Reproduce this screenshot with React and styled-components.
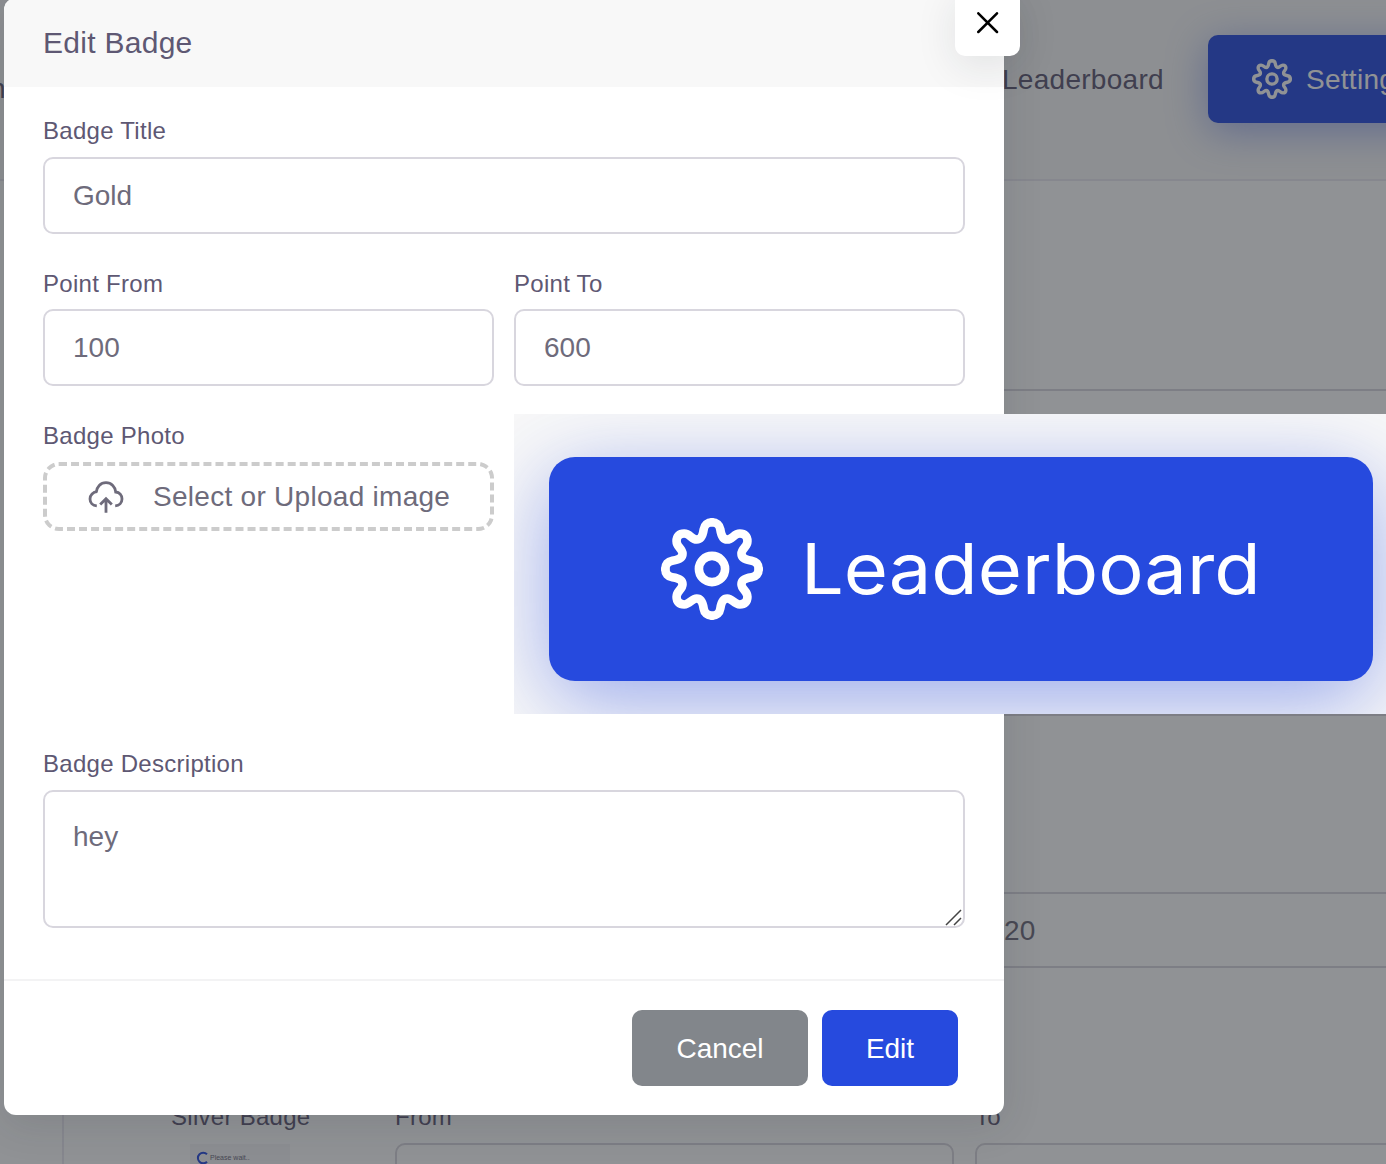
import React from "react";
import styled, { createGlobalStyle } from "styled-components";

const GlobalStyle = createGlobalStyle`
  *, *::before, *::after { box-sizing: border-box; }
  body {
    margin: 0;
    overflow: hidden;
    font-family: "Liberation Sans", Helvetica, Arial, sans-serif;
    letter-spacing: 0.28px;
    color: #5e5873;
  }
`;

const Screen = styled.div`
  position: relative;
  width: 1386px;
  height: 1164px;
  overflow: hidden;
  background: #fff;
`;

/* ---------- page behind the dialog ---------- */

const TopNav = styled.nav`
  display: flex;
  align-items: center;
  height: 181px;
  padding-bottom: 21px;
  background: #f8f8f8;
  border-bottom: 2px solid #ebe9f1;
`;

const NavItem = styled.span`
  flex: none;
  width: ${(p) => p.$width};
  margin-left: ${(p) => p.$offset || "0"};
  padding-top: ${(p) => p.$drop || "0"};
  font-size: 28px;
  line-height: 40px;
  white-space: nowrap;
`;

const NavButton = styled.div`
  flex: none;
  display: flex;
  align-items: center;
  gap: 14px;
  width: 250px;
  height: 88px;
  padding-left: 44px;
  border-radius: 10px;
  background: #264ade;
  color: #fff;
  font-size: 28px;
  box-shadow: 0 8px 40px rgba(38, 74, 222, 0.42);
`;

const NavButtonText = styled.span`
  padding-top: 2px;
`;

const BadgeList = styled.section`
  width: 1560px;
  height: 1100px;
  margin-left: 62px;
  padding: 166px 0 0 107px;
  border-left: 2px solid #ebe9f1;
`;

const BadgeRow = styled.div`
  display: grid;
  grid-template-columns: 203px 559px 559px;
  column-gap: 21px;
  height: 251.33px;
`;

const NameCell = styled.div`
  width: 160px;
  padding-top: 2px;
  font-size: 24px;
  line-height: 28px;
`;

const Thumb = styled.div`
  display: flex;
  gap: 1px;
  width: 100px;
  height: 60px;
  margin: 13px 0 0 19px;
  padding: 7px 6px;
  background: #f7f7f9;
  color: #6e6b7b;
  font-size: 7px;
  line-height: 14px;
  letter-spacing: 0;
`;

const FieldCell = styled.div`
  min-width: 0;
`;

const RowLabel = styled.div`
  height: 42px;
  padding-top: 2px;
  font-size: 24px;
  line-height: 28px;
`;

const RowInput = styled.div`
  height: 76px;
  padding-left: 27px;
  border: 2px solid #d8d6de;
  border-radius: 10px;
  font-size: 28px;
  line-height: 73px;
  color: #6e6b7b;
`;

const Backdrop = styled.div`
  position: absolute;
  inset: 0;
  background: rgba(34, 38, 44, 0.5);
`;

/* ---------- dialog ---------- */

const Dialog = styled.div`
  position: absolute;
  left: 4px;
  top: -2px;
  width: 1000px;
  height: 1117px;
  display: flex;
  flex-direction: column;
  border-radius: 12px;
  background: #fff;
  box-shadow: 0 10px 40px rgba(34, 41, 47, 0.12);
`;

const DialogHeader = styled.header`
  flex: none;
  height: 89px;
  padding: 25px 39px 0;
  border-radius: 12px 12px 0 0;
  background: #f8f8f8;
`;

const DialogTitle = styled.h5`
  margin: 0;
  font-size: 30px;
  font-weight: 400;
  line-height: 40px;
`;

const CloseButton = styled.button`
  position: absolute;
  left: 951px;
  top: -8px;
  width: 65px;
  height: 66px;
  display: flex;
  align-items: flex-start;
  padding: 22px 0 0 22px;
  border: 0;
  border-radius: 10px;
  background: #fff;
  box-shadow: 0 10px 40px rgba(34, 41, 47, 0.1);
`;

const DialogBody = styled.div`
  flex: none;
  height: 892px;
  padding: 30px 39px 0;
`;

const FieldRow = styled.div`
  display: grid;
  grid-template-columns: ${(p) => (p.$split ? "451px 451px" : "1fr")};
  column-gap: 20px;
  margin-bottom: ${(p) => p.$gap};
`;

const Field = styled.div`
  padding-top: ${(p) => p.$inset || "0"};
`;

const Label = styled.label`
  display: block;
  height: ${(p) => p.$height || "40px"};
  font-size: 24px;
  line-height: 28px;
`;

const Input = styled.input`
  display: block;
  width: 100%;
  height: 77px;
  padding: 1px 28px 0;
  border: 2px solid #d8d6de;
  border-radius: 10px;
  outline: none;
  background: #fff;
  color: #6e6b7b;
  font: 28px "Liberation Sans", Helvetica, Arial, sans-serif;
`;

const TextAreaWrap = styled.div`
  position: relative;
  svg {
    position: absolute;
    right: 3px;
    bottom: 2px;
  }
`;

const TextArea = styled.textarea`
  display: block;
  width: 100%;
  height: 138px;
  padding: 25px 28px 20px;
  border: 2px solid #d8d6de;
  border-radius: 10px;
  outline: none;
  resize: none;
  overflow: hidden;
  color: #6e6b7b;
  font: 28px/40px "Liberation Sans", Helvetica, Arial, sans-serif;
`;

const UploadBox = styled.div`
  display: flex;
  align-items: center;
  gap: 29px;
  height: 69px;
  padding-left: 41px;
  border: 4px dashed #ccc;
  border-radius: 16px;
  color: #6e6b7b;
  font-size: 28px;
  white-space: nowrap;
  svg { flex: none; }
`;

const Preview = styled.div`
  width: 900px;
  height: 300px;
  padding: 43px 0 0 35px;
  overflow: hidden;
  background: #f8f8f8;
`;

const PreviewButton = styled.div`
  display: flex;
  align-items: center;
  gap: 38px;
  width: 824px;
  height: 224px;
  padding-left: 112px;
  border-radius: 26px;
  background: #264ade;
  color: #fff;
  box-shadow: 0 20px 84px rgba(38, 74, 222, 0.45);
`;

const PreviewText = styled.span`
  font-family: Inter, "Open Sans", sans-serif;
  font-size: 70px;
  line-height: 90px;
  letter-spacing: 0;
  transform: scaleX(1.083);
  transform-origin: left center;
`;

const DialogFooter = styled.footer`
  display: flex;
  justify-content: flex-end;
  gap: 14px;
  padding: 29px 46px 0;
  border-top: 2px solid #f3f3f4;
`;

const Button = styled.button`
  width: ${(p) => p.$width};
  height: 76px;
  padding: 1px 0 0;
  border: 0;
  border-radius: 10px;
  background: ${(p) => (p.$primary ? "#264ade" : "#82868b")};
  color: #fff;
  font: 28px "Liberation Sans", Helvetica, Arial, sans-serif;
`;

const TOOTH =
  "M0-141C14-141 23-133 25-120C27-106 30-89 46-89C62-89 66-107 84-107C99-107 107-99 107-84C107-66 89-62 89-46C89-30 106-27 120-25C133-23 141-14 141 0";

function Gear({ size }) {
  return (
    <svg width={size} height={size} viewBox="-154 -154 308 308" fill="none" stroke="currentColor" strokeWidth="26" strokeLinecap="round">
      {[0, 90, 180, 270].map((angle) => (
        <path key={angle} d={TOOTH} transform={`rotate(${angle})`} />
      ))}
      <circle r="39.5" />
    </svg>
  );
}

function CloudUpload() {
  return (
    <svg width="36" height="36" viewBox="0 0 36 36" fill="none" stroke="currentColor" strokeWidth="2.8">
      <path d="M8.8 26.9C4.8 26.6 2 23.6 2 20C2 16.200 5 13 9.200 12.700" />
      <path d="M8.200 13.500C8.600 7.800 12.600 3.700 18 3.700S27.400 7.800 27.700 13C31.500 13.400 34 16.300 34 20C34 23.600 31.200 26.600 27.200 26.900" />
      <path d="M18 33.800V19.600M12.200 25.600L18 19.800L23.800 25.600" />
    </svg>
  );
}

const rows = [
  {},
  {},
  { to: "20" },
  { name: "Silver Badge", fromLabel: "From", toLabel: "To", thumb: true },
];

export default function App() {
  return (
    <>
      <GlobalStyle />
      <Screen>
        <TopNav>
          <NavItem $width="20px" $offset="-10px" $drop="19px">n</NavItem>
          <NavItem $width="206px" $offset="992px" $drop="2px">Leaderboard</NavItem>
          <NavButton>
            <Gear size={40} />
            <NavButtonText>Settings</NavButtonText>
          </NavButton>
        </TopNav>
        <BadgeList>
          {rows.map((row, i) => (
            <BadgeRow key={i}>
              <NameCell>
                {row.name}
                {row.thumb && (
                  <Thumb>
                    <svg width="13" height="14" viewBox="0 0 13 14" fill="none" stroke="#264ade" strokeWidth="2">
                      <path d="M11 3.300A5.300 5.300 0 1 0 11 10.700" />
                    </svg>
                    Please wait..
                  </Thumb>
                )}
              </NameCell>
              <FieldCell>
                <RowLabel>{row.fromLabel}</RowLabel>
                <RowInput />
              </FieldCell>
              <FieldCell>
                <RowLabel>{row.toLabel}</RowLabel>
                <RowInput>{row.to}</RowInput>
              </FieldCell>
            </BadgeRow>
          ))}
        </BadgeList>

        <Backdrop />

        <Dialog role="dialog">
          <DialogHeader>
            <DialogTitle>Edit Badge</DialogTitle>
          </DialogHeader>
          <CloseButton>
            <svg width="22" height="22" viewBox="0 0 22 22" stroke="#000" strokeWidth="2.5" strokeLinecap="round">
              <path d="M1.300 1.300L20 20M20 1.300L1.300 20" />
            </svg>
          </CloseButton>
          <DialogBody>
            <FieldRow $gap="36px">
              <Field>
                <Label>Badge Title</Label>
                <Input defaultValue="Gold" />
              </Field>
            </FieldRow>
            <FieldRow $split $gap="28px">
              <Field>
                <Label $height="39px">Point From</Label>
                <Input defaultValue="100" />
              </Field>
              <Field>
                <Label $height="39px">Point To</Label>
                <Input defaultValue="600" />
              </Field>
            </FieldRow>
            <FieldRow $split $gap="36px">
              <Field $inset="8px">
                <Label>Badge Photo</Label>
                <UploadBox>
                  <CloudUpload />
                  Select or Upload image
                </UploadBox>
              </Field>
              <Preview>
                <PreviewButton>
                  <Gear size={102} />
                  <PreviewText>Leaderboard</PreviewText>
                </PreviewButton>
              </Preview>
            </FieldRow>
            <Field>
              <Label>Badge Description</Label>
              <TextAreaWrap>
                <TextArea defaultValue="hey" />
                <svg width="17" height="17" viewBox="0 0 17 17" stroke="#444" strokeWidth="1.500">
                  <path d="M1 16L16 1M9 16L16 9" />
                </svg>
              </TextAreaWrap>
            </Field>
          </DialogBody>
          <DialogFooter>
            <Button $width="176px">Cancel</Button>
            <Button $width="136px" $primary>Edit</Button>
          </DialogFooter>
        </Dialog>
      </Screen>
    </>
  );
}
